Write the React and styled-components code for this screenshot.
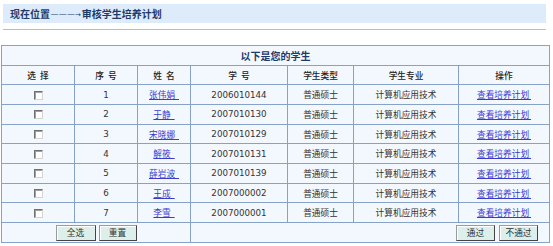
import React from "react";
import styled, { createGlobalStyle } from "styled-components";

const Global = createGlobalStyle`
  html, body { margin: 0; padding: 0; background: #fff; }
  body {
    font-family: "DejaVu Sans", "Noto Sans CJK SC", sans-serif;
    font-size: 8.7px;
    color: #333;
  }
`;

const Page = styled.div`
  padding: 4px 3px 0 1px;
  width: 549px;
  box-sizing: border-box;
`;

const LocationBar = styled.div`
  margin-left: 2px;
  height: 19px;
  line-height: 19px;
  background: #ddebfb;
  padding-left: 7px;
  font-family: "Noto Sans CJK SC", sans-serif;
  font-weight: bold;
  font-size: 10px;
  color: #1d3a6a;
`;

const Dashes = styled.span`
  font-family: "Liberation Sans", sans-serif;
  font-weight: normal;
  font-size: 7px;
  letter-spacing: 1.3px;
  margin-left: 1px;
  vertical-align: 2px;
`;

const Arrow = styled.span`
  font-family: "DejaVu Sans", sans-serif;
  font-weight: normal;
  font-size: 7px;
  margin-left: -1px;
  margin-right: 1px;
  vertical-align: 1px;
`;

const Rule = styled.div`
  margin: 6px 0 0 2px;
  height: 1px;
  background: #bcbcbc;
`;

const Table = styled.table`
  margin-top: 15px;
  width: 548px;
  border-collapse: collapse;
  table-layout: fixed;
  background: #f3f8fe;
  border: 1px solid #86a2c8;
`;

const Cell = styled.td`
  border: 1px solid #86a2c8;
  padding: 0;
  text-align: ${(p) => p.$align || "center"};
  padding-right: ${(p) => p.$pr || 0}px;
  vertical-align: middle;
  white-space: nowrap;
`;

const TitleCell = styled.td`
  border: 1px solid #86a2c8;
  text-align: center;
  font-family: "Noto Sans CJK SC", sans-serif;
  font-weight: bold;
  font-size: 10px;
  color: #1d3a6a;
  padding: 0;
`;

const Row = styled.tr`
  height: ${(p) => p.$h || 19.7}px;
`;

const HeadCell = styled.th`
  border: 1px solid #86a2c8;
  padding: 0;
  font-weight: 500;
  font-family: "Noto Sans CJK SC", sans-serif;
  font-size: 8.7px;
  color: #222;
  word-spacing: 2px;
`;

const Link = styled.a`
  color: #3a3ad0;
  text-decoration: underline;
  font-family: "Noto Sans CJK SC", sans-serif;
  white-space: pre;
`;

const Check = styled.span`
  display: inline-block;
  width: 7px;
  height: 7px;
  background: #fff;
  border: 1px solid;
  border-color: #707070 #d4d4d4 #d4d4d4 #707070;
  box-shadow: inset 1px 1px 0 #a0a0a0;
  vertical-align: middle;
`;

const Btn = styled.button`
  height: 16px;
  width: ${(p) => p.$w || 40}px;
  padding: 0;
  margin: 0 ${(p) => p.$mr || 0}px 0 0;
  background: #dcefea;
  border: 1px solid;
  border-color: #9a9a9a #444 #444 #9a9a9a;
  box-shadow: inset 1px 1px 0 #fff;
  font-family: "Noto Sans CJK SC", sans-serif;
  font-size: 8.7px;
  color: #333;
  vertical-align: middle;
`;

const students = [
  ["张伟娟", "2006010144"],
  ["于静", "2007010130"],
  ["宋晓娜", "2007010129"],
  ["解筱", "2007010131"],
  ["薛岩波", "2007010139"],
  ["王成", "2007000002"],
  ["李雪", "2007000001"],
];

const widths = [73, 63, 53, 97, 66, 105, 91];

export default function App() {
  return (
    <Page>
      <Global />
      <LocationBar>
        现在位置<Dashes>———</Dashes><Arrow>→</Arrow>审核学生培养计划
      </LocationBar>
      <Rule />
      <Table>
        <colgroup>
          {widths.map((w, i) => (
            <col key={i} style={{ width: w }} />
          ))}
        </colgroup>
        <tbody>
          <Row $h={20}>
            <TitleCell colSpan={7}>以下是您的学生</TitleCell>
          </Row>
          <Row $h={19.3}>
            <HeadCell>选 择</HeadCell>
            <HeadCell>序 号</HeadCell>
            <HeadCell>姓 名</HeadCell>
            <HeadCell>学 号</HeadCell>
            <HeadCell>学生类型</HeadCell>
            <HeadCell>学生专业</HeadCell>
            <HeadCell>操作</HeadCell>
          </Row>
          {students.map(([name, id], i) => (
            <Row key={id}>
              <Cell>
                <Check />
              </Cell>
              <Cell>{i + 1}</Cell>
              <Cell>
                <Link href="#">{name + "  "}</Link>
              </Cell>
              <Cell>{id}</Cell>
              <Cell>普通硕士</Cell>
              <Cell>计算机应用技术</Cell>
              <Cell>
                <Link href="#">{"查看培养计划 "}</Link>
              </Cell>
            </Row>
          ))}
          <Row $h={20}>
            <Cell colSpan={3}>
              <Btn $w={40} $mr={3}>全选</Btn>
              <Btn $w={38}>重置</Btn>
            </Cell>
            <Cell colSpan={4} $align="right" $pr={11}>
              <Btn $w={39} $mr={4}>通过</Btn>
              <Btn $w={39}>不通过</Btn>
            </Cell>
          </Row>
        </tbody>
      </Table>
    </Page>
  );
}
